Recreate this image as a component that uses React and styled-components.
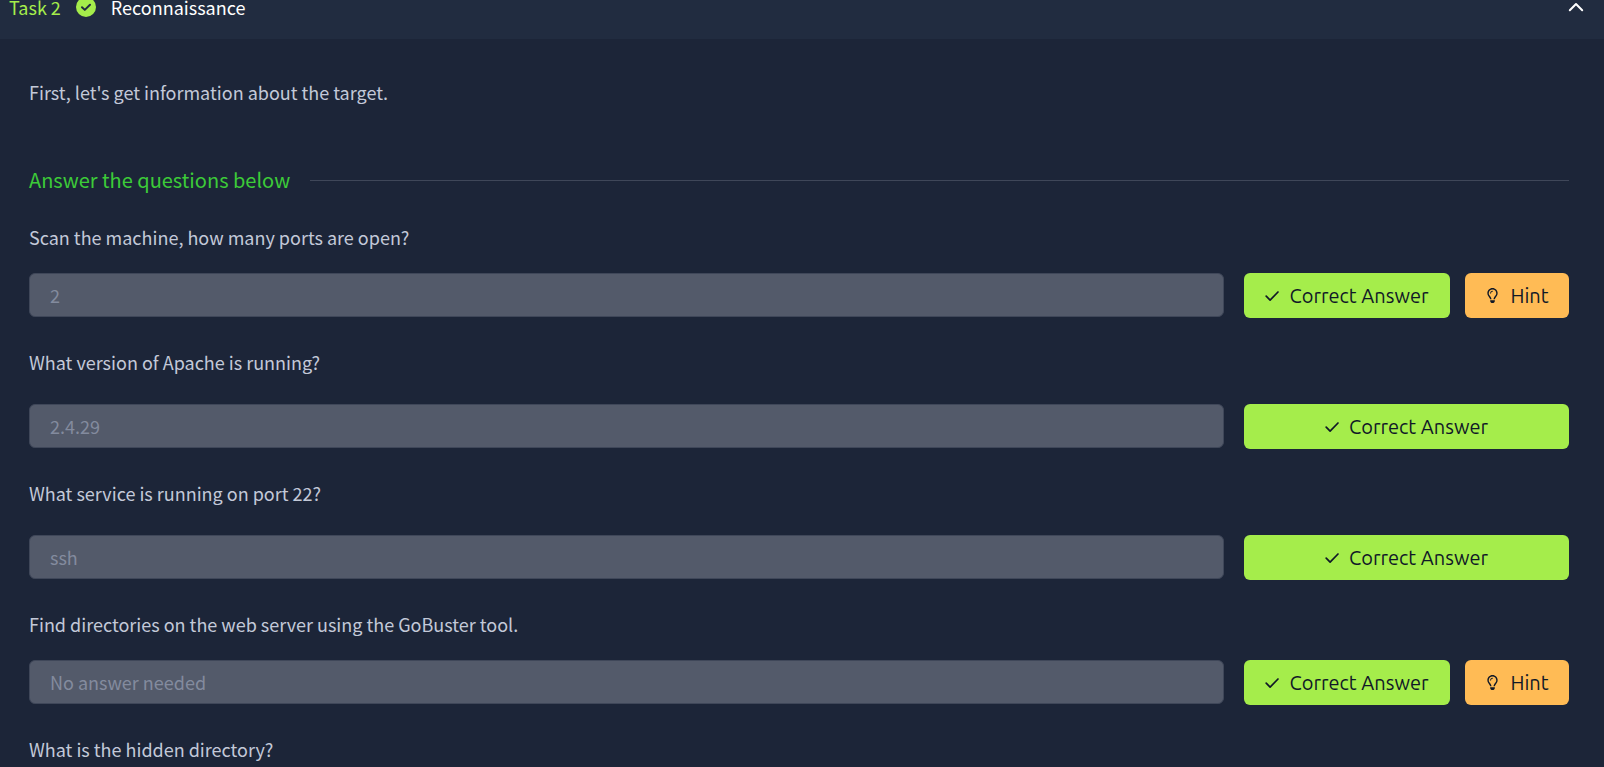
import { useId, useState } from 'react';
import styled, { createGlobalStyle, ThemeProvider } from 'styled-components';
import { FaRegLightbulb } from 'react-icons/fa6';

const theme = {
  bodyBg: '#1c2538',
  headerBg: '#212c40',
  border: '#3f4759',
  inputBg: '#535a6a',
  text: '#c3c9d8',
  placeholder: '#838b9e',
  lime: '#a5ed4b',
  green: '#3ccb38',
  amber: '#ffbb55',
  ink: '#101827',
  font: '"Source Sans Pro", "Noto Sans CJK SC", sans-serif',
  buttonFont: 'Ubuntu, "Noto Sans", sans-serif',
};

const GlobalStyle = createGlobalStyle`
  *, *::before, *::after {
    box-sizing: border-box;
  }

  html {
    height: 100%;
    background: ${p => p.theme.bodyBg};
  }

  body {
    height: 100%;
    margin: 0;
    overflow: hidden;
    font-family: ${p => p.theme.font};
    color: ${p => p.theme.text};
  }

  h2, h3, p {
    margin: 0;
    font-weight: 400;
  }
`;

const TaskHeader = styled.button`
  display: flex;
  align-items: center;
  gap: 15px;
  width: 100%;
  height: 64px;
  margin-top: -25px;
  padding: 0 20px 0 9px;
  border: none;
  background: ${p => p.theme.headerBg};
  color: #fff;
  font-family: inherit;
  font-size: 18px;
  line-height: 24px;
  cursor: pointer;
`;

const TaskNumber = styled.span`
  color: ${p => p.theme.lime};
`;

const TaskName = styled.span`
  flex: 1;
  text-align: left;
`;

const TaskBody = styled.div`
  padding: 41px 35px 0 29px;
`;

const Intro = styled.p`
  font-size: 18px;
  line-height: 24px;
`;

const SectionTitle = styled.h2`
  display: flex;
  align-items: center;
  gap: 20px;
  margin: 62px 0 31px;
  font-size: 20px;
  line-height: 28px;
  color: ${p => p.theme.green};

  &::after {
    content: '';
    flex: 1;
    height: 1px;
    background: ${p => p.theme.border};
  }
`;

const Questions = styled.div`
  display: flex;
  flex-direction: column;
  gap: 32px;
`;

const QuestionForm = styled.form`
  display: grid;
  grid-template-columns: 1fr 325px;
  align-items: start;
  column-gap: 20px;
  row-gap: ${p => (p.$hasHint ? '24px' : '30px')};
`;

const QuestionLabel = styled.label`
  grid-column: 1 / -1;
  font-size: 18px;
  line-height: 24px;
`;

const AnswerInput = styled.input`
  width: 100%;
  height: 44px;
  padding: 0 20px;
  border: 1px solid ${p => p.theme.border};
  border-radius: 6px;
  background: ${p => p.theme.inputBg};
  font-family: inherit;
  font-size: 18px;

  &::placeholder {
    color: ${p => p.theme.placeholder};
    opacity: 1;
  }
`;

const Actions = styled.div`
  display: flex;
  gap: 15px;
`;

const ActionBtn = styled.button`
  display: flex;
  flex: ${p => (p.$variant === 'hint' ? '0 0 104px' : '1')};
  align-items: center;
  justify-content: center;
  gap: 10px;
  height: 45px;
  padding: 0;
  border: none;
  border-radius: 6px;
  background: ${p => (p.$variant === 'hint' ? p.theme.amber : p.theme.lime)};
  color: ${p => p.theme.ink};
  font-family: ${p => p.theme.buttonFont};
  font-size: 20px;
  white-space: nowrap;
  cursor: pointer;
`;

const questions = [
  { text: 'Scan the machine, how many ports are open?', answer: '2', hint: true },
  { text: 'What version of Apache is running?', answer: '2.4.29' },
  { text: 'What service is running on port 22?', answer: 'ssh' },
  { text: 'Find directories on the web server using the GoBuster tool.', answer: 'No answer needed', hint: true },
  { text: 'What is the hidden directory?' },
];

function DoneIcon() {
  return (
    <svg width="20" height="20" viewBox="0 0 20 20" fill="none" aria-hidden="true">
      <circle cx="10" cy="10" r="10" fill={theme.lime} />
      <path d="M6 10.2l2.8 2.7 5.2-5.1" stroke={theme.headerBg} strokeWidth="2" strokeLinecap="round" strokeLinejoin="round" />
    </svg>
  );
}

function CheckIcon() {
  return (
    <svg width="14" height="12" viewBox="0 0 14 12" fill="none" aria-hidden="true">
      <path d="M1.2 6.2l3.9 3.9L13 2" stroke="currentColor" strokeWidth="1.7" strokeLinecap="round" strokeLinejoin="round" />
    </svg>
  );
}

function ChevronIcon({ open }) {
  return (
    <svg width="16" height="12" viewBox="0 0 16 12" fill="none" aria-hidden="true">
      <path
        d={open ? 'M1.8 9.2L8 3l6.2 6.2' : 'M1.8 3L8 9.2 14.2 3'}
        stroke="currentColor"
        strokeWidth="2"
        strokeLinecap="round"
        strokeLinejoin="round"
      />
    </svg>
  );
}

function Question({ text, answer, hint }) {
  const id = useId();

  // questions without an answer yet only show their text
  if (!answer) return <QuestionLabel as="p">{text}</QuestionLabel>;

  return (
    <QuestionForm $hasHint={hint} onSubmit={e => e.preventDefault()}>
      <QuestionLabel htmlFor={id}>{text}</QuestionLabel>
      <AnswerInput id={id} type="text" placeholder={answer} disabled />
      <Actions>
        <ActionBtn type="submit">
          <CheckIcon />
          Correct Answer
        </ActionBtn>
        {hint && (
          <ActionBtn type="button" $variant="hint">
            <FaRegLightbulb size={15} aria-hidden="true" />
            Hint
          </ActionBtn>
        )}
      </Actions>
    </QuestionForm>
  );
}

export default function App() {
  const [open, setOpen] = useState(true);

  return (
    <ThemeProvider theme={theme}>
      <GlobalStyle />
      <TaskHeader type="button" aria-expanded={open} onClick={() => setOpen(!open)}>
        <TaskNumber>Task 2</TaskNumber>
        <DoneIcon />
        <TaskName>Reconnaissance</TaskName>
        <ChevronIcon open={open} />
      </TaskHeader>

      {open && (
        <TaskBody>
          <Intro>First, let's get information about the target.</Intro>
          <SectionTitle>Answer the questions below</SectionTitle>
          <Questions>
            {questions.map(q => (
              <Question key={q.text} {...q} />
            ))}
          </Questions>
        </TaskBody>
      )}
    </ThemeProvider>
  );
}
